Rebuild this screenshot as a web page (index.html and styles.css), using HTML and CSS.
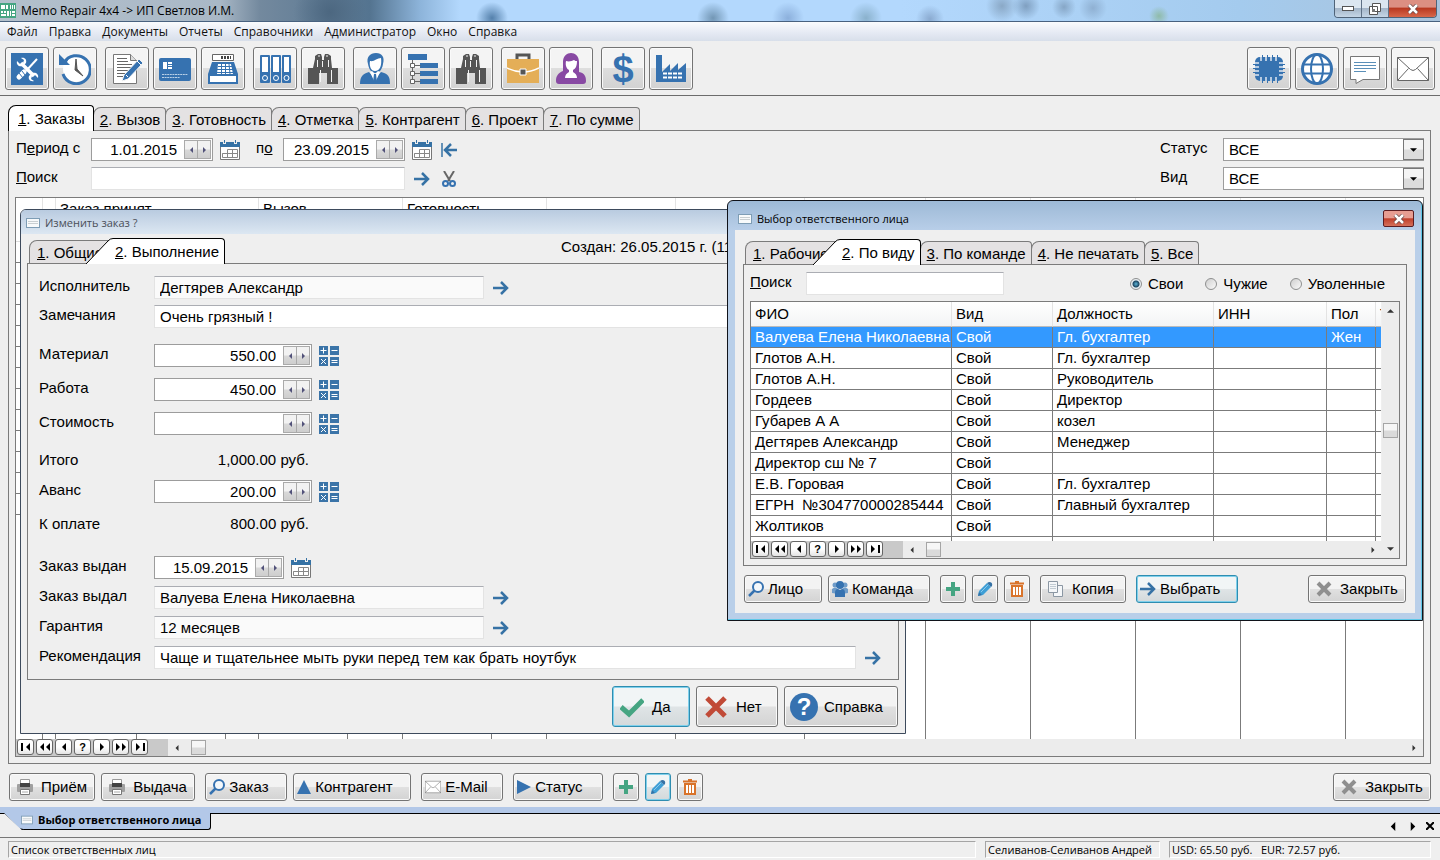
FILE: index.html
```html
<!DOCTYPE html>
<html lang="ru">
<head>
<meta charset="utf-8">
<title>Memo Repair 4x4</title>
<link rel="stylesheet" href="styles.css">
</head>
<body>
<svg class="sprite" aria-hidden="true">
  <symbol id="app" viewBox="0 0 16 16"><rect width="16" height="15" fill="#45a582"/><path fill="#fff" d="M1 2h4v4H1zM6 2h2v4H6zM10 2h1v4h-1zM12 2h1v4h-1zM14 2h1v4h-1zM1 8h2v2H1zM4 8h2v2H4zM1 11h5v2H1zM7 8h2v5H7zM10 8h1v5h-1zM12 8h3v2h-3zM12 11h3v2h-3z"/></symbol>
  <symbol id="form" viewBox="0 0 14 10"><rect x=".5" y=".5" width="13" height="9" fill="#f8fafb" stroke="#7e9db5"/><path d="M2 3.500h10M2 5.500h10" stroke="#c9cfd2"/></symbol>
  <symbol id="tools" viewBox="0 0 32 32"><rect width="32" height="32" fill="#3672b0"/><path d="M10 10l13 13" stroke="#fff" stroke-width="3.500"/><path d="M6 8l3 3 3-1 1-3-3-2c4-1 6 2 5 5l-3 3c-4 1-7-1-6-5zM27 25l-3-3-3 1-1 3 3 2c-4 1-6-2-5-5l3-3c4-1 7 1 6 5z" fill="#fff"/><path d="M26 6L15 18" stroke="#fff" stroke-width="2"/><path d="M13 19L8 24" stroke="#fff" stroke-width="5" stroke-linecap="round"/><path d="M8 20l4 5M11 18l3 4" stroke="#3672b0"/></symbol>
  <symbol id="history" viewBox="0 0 32 32"><circle cx="17" cy="16" r="13" fill="#fff"/><path d="M5 10A14 14 0 1 1 4 21" fill="none" stroke="#3672b0" stroke-width="3"/><path d="M0 1v11h11L8 9l2-4-4 2z" fill="#3672b0"/><path d="M17 6l1 10 6 7-8-6z" fill="#555" stroke="#555" stroke-width="1"/></symbol>
  <symbol id="note" viewBox="0 0 32 32"><path d="M2.500 1.500h17l6 6v23h-23z" fill="#fff" stroke="#777"/><path d="M19.500 1.500v6h6" fill="#ddd" stroke="#777"/><path d="M6 5.500h10M6 8.500h11M6 11.500h15M6 14.500h15M6 17.500h11M6 20.500h9M6 23.500h6" stroke="#666"/><path d="M13 22L28 6l4 4-15 16-6 2z" fill="#3672b0" stroke="#f3f3f3"/><path d="M26 8l4 4M15 22l2 2" stroke="#fff"/></symbol>
  <symbol id="card" viewBox="0 0 32 32"><rect y="5" width="32" height="23" rx="2" fill="#3672b0"/><path d="M4 9h4v7H4zM9 9h4v2H9zM9 12h4v1H9zM9 14h4v2H9z" fill="#fff"/><path d="M3 21.500h26M3 24.500h18" stroke="#b9d0e6" stroke-dasharray="2 .6"/></symbol>
  <symbol id="cash" viewBox="0 0 32 32"><path d="M5.500 1.500h21v6h-21z" fill="#fff" stroke="#666"/><path d="M14 4.500h10" stroke="#444" stroke-width="3" stroke-dasharray="2 1"/><path d="M5 9h22l4 12v10H1V21z" fill="#3672b0"/><path d="M3 23h26v6H3z" fill="#fff"/><path d="M11 11h13l2 10H10z" fill="#fff"/><path d="M11 13.500h14M10 16.500h16M10 19.500h16M14.500 11v10M18.500 11v10M22 11l1 10" stroke="#3672b0"/></symbol>
  <symbol id="binders" viewBox="0 0 32 32"><g fill="#3672b0"><rect x="1" y="2" width="10" height="28" rx="1"/><rect x="12" y="2" width="10" height="28" rx="1"/><rect x="23" y="2" width="9" height="28" rx="1"/></g><path d="M3 4h6v15H3zM14 4h6v15h-6zM25 4h5v15h-5z" fill="#fff"/><g fill="none" stroke="#fff"><circle cx="6" cy="25" r="2.500"/><circle cx="17" cy="25" r="2.500"/><circle cx="27.500" cy="25" r="2.500"/></g></symbol>
  <symbol id="binoc" viewBox="0 0 32 32"><path d="M8 6V3l3-2h3l1 3v3h2V4l1-3h3l3 2v3l1 9h6v16H20V20h-8v11H1V15h5z" fill="#555"/><path d="M10.500 7v7M15.500 8v6M21.500 7v7M13.500 17v12M24.500 17v12" stroke="#f4f4f4"/><path d="M11 3h2M19 3h2" stroke="#f4f4f4"/></symbol>
  <symbol id="man" viewBox="0 0 32 32"><path d="M9 11C7 4 11 0 17 0s9 4 7 11c-1 7-5 9-8 9s-6-3-7-9z" fill="#3672b0"/><path d="M11 8c4 1 7-3 11-3 1 7-1 13-6 13-4 0-6-5-5-10z" fill="#fff"/><path d="M1 31c0-8 3-10 9-12l6 7 6-7c7 2 9 4 9 12z" fill="#3672b0"/><path d="M11 19l5 11 5-11-2-1-3 3-3-3z" fill="#fff"/><path d="M15 21h2l1 8-2 2-2-2z" fill="#3672b0"/></symbol>
  <symbol id="tree" viewBox="0 0 32 32"><path d="M1 1h19v6H1zM13 10h18v5H13zM13 18h18v5H13zM13 26h18v5H13z" fill="#3672b0"/><path d="M5.500 7v22M5.500 12.500h8M5.500 20.500h8M5.500 28.500h8" stroke="#666" fill="none"/><path d="M3.500 10.500h4v4h-4zM3.500 18.500h4v4h-4zM3.500 26.500h4v4h-4z" fill="#fff" stroke="#666"/></symbol>
  <symbol id="brief" viewBox="0 0 32 32"><path d="M10 6V2h12v4" fill="none" stroke="#555" stroke-width="3"/><path d="M0 6h32v24H0z" fill="#e4ae57"/><path d="M0 15q16 8 32 0" fill="none" stroke="#fff" stroke-width="1.500"/><path d="M13 16h6v6h-6z" fill="#555" stroke="#fff"/></symbol>
  <symbol id="woman" viewBox="0 0 32 32"><path d="M8 18V9c0-6 4-9 8-9s8 3 8 9v10c6 1 7 5 7 9q0 3-3 3H4q-3 0-3-3c0-5 2-8 7-10z" fill="#8849a3"/><path d="M11 8c3 1 6 0 8-1 1 1 2 1 3 1 0 6-2 8-4 9v2q4 2 4 6H10q0-4 4-6v-2c-2-1-4-4-3-9z" fill="#fff"/></symbol>
  <symbol id="factory" viewBox="0 0 32 32"><path d="M1 2h6v17l8-8v7l8-8v7l8-7v19H1z" fill="#3672b0"/><path d="M8 20.500h19M8 24.500h19" stroke="#fff" stroke-width="2" stroke-dasharray="4 1"/></symbol>
  <symbol id="chip" viewBox="0 0 32 32"><rect x="2" y="4" width="28" height="24" rx="5" fill="#3672b0"/><path d="M8 4v4M13 4v4M18 4v4M23 4v4M8 24v4M13 24v4M18 24v4M23 24v4M2 10h4M2 14h4M2 18h4M2 22h4M26 10h4M26 14h4M26 18h4M26 22h4" stroke="#dfe8f1" stroke-width="1.500"/><path d="M9.500 2v6M14.500 2v6M19.500 2v6M24.500 2v6M9.500 24v6M14.500 24v6M19.500 24v6M24.500 24v6M0 11.500h6M0 15.500h6M0 19.500h6M26 11.500h6M26 15.500h6M26 19.500h6" stroke="#3672b0"/></symbol>
  <symbol id="globe" viewBox="0 0 32 32"><circle cx="16" cy="16" r="14.500" fill="#fff" stroke="#3672b0" stroke-width="3"/><ellipse cx="16" cy="16" rx="6" ry="14.500" fill="none" stroke="#3672b0" stroke-width="2"/><path d="M2 11.500h28M2 20.500h28" stroke="#3672b0" stroke-width="2"/></symbol>
  <symbol id="chat" viewBox="0 0 32 32"><path d="M1.500 3.500h29v23H14l-7 4v-4H1.500z" fill="#fff" stroke="#777"/><path d="M5 9.500h22M5 12.500h22M5 15.500h22M5 18.500h12" stroke="#5a8fb8"/></symbol>
  <symbol id="mail" viewBox="0 0 32 24"><path d="M.5.5h31v23H.5z" fill="#fff" stroke="#666"/><path d="M.5.5l13 12q2.500 2 5 0l13-12M.5 23.500l11-12M31.500 23.500l-11-12" fill="none" stroke="#666"/></symbol>
  <symbol id="cal" viewBox="0 0 20 20"><path d="M.5 6.500h19v13H.5z" fill="#fff" stroke="#777"/><path d="M0 2h3v2h3V2h8v2h3V2h3v5H0z" fill="#3672a5"/><path d="M4 0h1v3H4zM15 0h1v3h-1z" fill="#3672a5"/><path d="M7.500 9.500h10v8h-15v-4h15M2.500 13.500h5M7.500 9.500v8M12.500 9.500v8" fill="none" stroke="#888"/></symbol>
  <symbol id="right" viewBox="0 0 16 14"><path d="M0 7h14M8 1l6 6-6 6" fill="none" stroke="#3672a5" stroke-width="2.500"/></symbol>
  <symbol id="first" viewBox="0 0 16 14"><path d="M1 0v14" stroke="#3672a5" stroke-width="1.500"/><path d="M16 7H4M10 1L4 7l6 6" fill="none" stroke="#3672a5" stroke-width="2.500"/></symbol>
  <symbol id="cut" viewBox="0 0 14 16"><path d="M2 0l6 10M12 0L6 10" stroke="#666" stroke-width="2"/><g fill="none" stroke="#3672b0" stroke-width="2"><circle cx="3.500" cy="12.500" r="2.500"/><circle cx="10.500" cy="12.500" r="2.500"/></g></symbol>
  <symbol id="calc" viewBox="0 0 20 20"><path d="M0 0h9v9H0zM11 0h9v9h-9zM0 11h9v9H0zM11 11h9v9h-9z" fill="#3b74a8"/><path d="M1.500 4.500h6M4.500 1.500v6M12.500 4.500h6M2 13l5 5M7 13l-5 5M12.500 14.500h6M12.500 16.500h6" stroke="#fff"/></symbol>
  <symbol id="lens" viewBox="0 0 16 16"><circle cx="10" cy="6" r="5" fill="#f4f8fb" stroke="#3672b0" stroke-width="2"/><path d="M6.500 9.500L1 15" stroke="#3672b0" stroke-width="2.500"/></symbol>
  <symbol id="team" viewBox="0 0 16 16"><g fill="#6f9cc9"><circle cx="3" cy="4" r="2.500"/><circle cx="13" cy="4" r="2.500"/><path d="M0 12V8q3-3 6 0v5zM16 12V8q-3-3-6 0v5z"/></g><circle cx="8" cy="4" r="4" fill="#3672b0"/><path d="M3 16v-4q0-4 3-4l2 1 2-1q3 0 3 4v4z" fill="#3672b0"/></symbol>
  <symbol id="plus" viewBox="0 0 14 14"><path d="M7 0v14M0 7h14" stroke="#45a582" stroke-width="4"/></symbol>
  <symbol id="pencil" viewBox="0 0 16 16"><path d="M1 15l1-5 8-8 4 4-8 8z" fill="#3f9fd6"/><path d="M10 2l2-1q4 0 3 4l-1 1z" fill="#3672a5"/><path d="M4 11l7-7" stroke="#8cc9ec"/><path d="M1 15l1-4 3 3z" fill="#3672a5"/></symbol>
  <symbol id="bin" viewBox="0 0 14 16"><path d="M0 2.500h14M5 1h4" stroke="#d9732a" stroke-width="2"/><path d="M2 5h10v10H2z" fill="#fff" stroke="#d9732a" stroke-width="2"/><path d="M5.500 6v8M8.500 6v8" stroke="#d9732a"/></symbol>
  <symbol id="copy" viewBox="0 0 16 16"><path d="M5.500 4.500h9v11h-9z" fill="#f5f7f9" stroke="#8b97a3"/><path d="M.5.500h9v11h-9z" fill="#f5f7f9" stroke="#8b97a3"/><path d="M2 3.500h6M2 5.500h6M2 7.500h6" stroke="#c2ccd4"/></symbol>
  <symbol id="cross" viewBox="0 0 16 16"><path d="M2 2l12 12M14 2L2 14" stroke="currentColor" stroke-width="4"/></symbol>
  <symbol id="bigcross" viewBox="0 0 24 24"><path d="M3 3l18 18M21 3L3 21" stroke="#c14a37" stroke-width="5"/></symbol>
  <symbol id="check" viewBox="0 0 24 20"><path d="M1 10l8 7L23 3" fill="none" stroke="#45a582" stroke-width="5"/></symbol>
  <symbol id="print" viewBox="0 0 16 16"><path d="M3.500.5h9v6h-9z" fill="#fff" stroke="#999"/><rect y="5" width="16" height="8" rx="1" fill="#a0a0a0"/><path d="M3 4h10v4H3z" fill="#444"/><path d="M3.500 10.500h9v5h-9z" fill="#fff" stroke="#777"/><path d="M5 13h6" stroke="#aaa"/></symbol>
  <symbol id="tri-up" viewBox="0 0 14 14"><path d="M7 0l7 14H0z" fill="#3672b0"/></symbol>
  <symbol id="tri-right" viewBox="0 0 14 14"><path d="M0 0l14 7-14 7z" fill="#3672b0"/></symbol>
  <symbol id="al" viewBox="0 0 4 8"><path d="M4 0v8L0 4z" fill="currentColor"/></symbol>
  <symbol id="ar" viewBox="0 0 4 8"><path d="M0 0v8l4-4z" fill="currentColor"/></symbol>
  <symbol id="ad" viewBox="0 0 8 4"><path d="M0 0h8L4 4z" fill="currentColor"/></symbol>
  <symbol id="au" viewBox="0 0 8 4"><path d="M0 4h8L4 0z" fill="currentColor"/></symbol>
  <symbol id="n1" viewBox="0 0 12 8"><path d="M1 0h2v8H1zM10 0v8L6 4z"/></symbol>
  <symbol id="n2" viewBox="0 0 12 8"><path d="M5 0v8L1 4zM11 0v8L7 4z"/></symbol>
  <symbol id="n3" viewBox="0 0 12 8"><path d="M8 0v8L4 4z"/></symbol>
  <symbol id="n4" viewBox="0 0 12 8"><path d="M4 0v8l4-4z"/></symbol>
  <symbol id="n5" viewBox="0 0 12 8"><path d="M1 0v8l4-4zM7 0v8l4-4z"/></symbol>
  <symbol id="n6" viewBox="0 0 12 8"><path d="M2 0v8l4-4zM9 0h2v8H9z"/></symbol>
  <symbol id="slant" viewBox="0 0 27 26"><path d="M0 26L22 3q2-2.500 5-2.500V26z" fill="#fff"/><path d="M0 26L22 3q2-2.500 5-2.500" fill="none" stroke="#000"/></symbol>
</svg>

<header class="titlebar">
  <svg class="i16"><use href="#app"/></svg>
  <h1>Memo Repair 4x4 -&gt; ИП Светлов И.М.</h1>
  <div class="winbtns">
    <button aria-label="Свернуть"><svg width="12" height="5"><rect x=".5" y=".5" width="11" height="4" fill="#fff" stroke="#555"/></svg></button>
    <button aria-label="Восстановить"><svg width="12" height="12"><path d="M3.500.5h8v8h-8zM.5 3.500h8v8h-8z" fill="#fff" stroke="#555"/><path d="M3 6h3v3H3z" fill="#777"/></svg></button>
    <button class="x" aria-label="Закрыть окно"><svg width="12" height="10"><path d="M2 1l8 8M10 1L2 9" stroke="#644" stroke-width="4"/><path d="M2 1l8 8M10 1L2 9" stroke="#fff" stroke-width="2.500"/></svg></button>
  </div>
</header>
<nav class="menu"><a href="#">Файл</a><a href="#">Правка</a><a href="#">Документы</a><a href="#">Отчеты</a><a href="#">Справочники</a><a href="#">Администратор</a><a href="#">Окно</a><a href="#">Справка</a></nav>
<div class="toolbar">
  <div class="grp"><button aria-label="Ремонт"><svg><use href="#tools"/></svg></button><button aria-label="История"><svg><use href="#history"/></svg></button></div>
  <div class="grp"><button aria-label="Документ"><svg><use href="#note"/></svg></button><button aria-label="Карта"><svg><use href="#card"/></svg></button><button aria-label="Касса"><svg><use href="#cash"/></svg></button></div>
  <div class="grp"><button aria-label="Архив"><svg><use href="#binders"/></svg></button><button aria-label="Поиск в архиве"><svg><use href="#binoc"/></svg></button></div>
  <div class="grp"><button aria-label="Контрагент"><svg><use href="#man"/></svg></button><button aria-label="Структура"><svg><use href="#tree"/></svg></button><button aria-label="Поиск контрагента"><svg><use href="#binoc"/></svg></button></div>
  <div class="grp"><button aria-label="Портфель"><svg><use href="#brief"/></svg></button><button aria-label="Сотрудник"><svg><use href="#woman"/></svg></button></div>
  <div class="grp"><button class="dollar" aria-label="Валюта">$</button><button aria-label="Предприятие"><svg><use href="#factory"/></svg></button></div>
  <div class="grp end"><button aria-label="Оборудование"><svg><use href="#chip"/></svg></button><button aria-label="Сайт"><svg><use href="#globe"/></svg></button><button aria-label="Сообщения"><svg><use href="#chat"/></svg></button><button aria-label="Почта"><svg><use href="#mail"/></svg></button></div>
</div>

<main class="main">
  <div class="tabs">
    <button class="tab on"><u>1</u>. Заказы</button><button class="tab"><u>2</u>. Вызов</button><button class="tab"><u>3</u>. Готовность</button><button class="tab"><u>4</u>. Отметка</button><button class="tab"><u>5</u>. Контрагент</button><button class="tab"><u>6</u>. Проект</button><button class="tab"><u>7</u>. По сумме</button>
  </div>
  <section class="panel">
    <div class="filters">
      <div class="frow">
        <label class="flabel" for="from">П<u>е</u>риод с</label>
        <div class="spin date"><input id="from" value="1.01.2015"><button aria-label="Раньше"><svg><use href="#al"/></svg></button><button aria-label="Позже"><svg><use href="#ar"/></svg></button></div>
        <button class="ib" aria-label="Календарь"><svg class="i20"><use href="#cal"/></svg></button>
        <label class="to" for="to">п<u>о</u></label>
        <div class="spin date"><input id="to" value="23.09.2015"><button aria-label="Раньше"><svg><use href="#al"/></svg></button><button aria-label="Позже"><svg><use href="#ar"/></svg></button></div>
        <button class="ib" aria-label="Календарь"><svg class="i20"><use href="#cal"/></svg></button>
        <button class="ib" aria-label="В начало"><svg class="i16"><use href="#first"/></svg></button>
        <label class="slabel" for="status">Статус</label>
        <div class="sel"><select id="status"><option>ВСЕ</option></select><span><svg><use href="#ad"/></svg></span></div>
      </div>
      <div class="frow">
        <label class="flabel" for="find"><u>П</u>оиск</label>
        <input class="txt find" id="find">
        <button class="ib" aria-label="Найти"><svg class="i16"><use href="#right"/></svg></button>
        <button class="ib" aria-label="Очистить"><svg class="i16"><use href="#cut"/></svg></button>
        <label class="slabel" for="kind">Вид</label>
        <div class="sel"><select id="kind"><option>ВСЕ</option></select><span><svg><use href="#ad"/></svg></span></div>
      </div>
    </div>
    <div class="gridbox">
      <div class="orders">
        <table>
          <colgroup><col class="w27"><col class="w13"><col class="w81"><col class="w89"><col class="w33"><col class="w89"><col class="w55"><col class="w89"><col class="w55"><col class="w129"><col class="w129"><col class="w121"><col class="w105"><col class="w105"><col class="w105"><col class="w105"><col></colgroup>
          <thead><tr><th></th><th></th><th colspan="3">Заказ принят</th><th colspan="2">Вызов</th><th colspan="2">Готовность</th><th></th><th></th><th></th><th></th><th></th><th></th><th></th><th></th></tr></thead>
          <tbody id="rows"></tbody>
        </table>
      </div>
      <div class="navrow">
        <div class="nav"><button aria-label="Первая"><svg><use href="#n1"/></svg></button><button aria-label="Страница назад"><svg><use href="#n2"/></svg></button><button aria-label="Назад"><svg><use href="#n3"/></svg></button><button>?</button><button aria-label="Вперёд"><svg><use href="#n4"/></svg></button><button aria-label="Страница вперёд"><svg><use href="#n5"/></svg></button><button aria-label="Последняя"><svg><use href="#n6"/></svg></button></div>
        <div class="hscroll"><svg class="sa"><use href="#al"/></svg><i class="thumb"></i><svg class="sa last"><use href="#ar"/></svg></div>
      </div>
    </div>
  </section>
  <div class="actions">
    <button class="btn b86"><svg class="i16"><use href="#print"/></svg>Приём</button>
    <button class="btn b94 gap"><svg class="i16"><use href="#print"/></svg>Выдача</button>
    <button class="btn b82 tight"><svg class="i16"><use href="#lens"/></svg>Заказ</button>
    <button class="btn b118 tight gap"><svg class="i14"><use href="#tri-up"/></svg>Контрагент</button>
    <button class="btn b82 tight gap"><svg class="i16"><use href="#mail"/></svg>E-Mail</button>
    <button class="btn b90 tight gap"><svg class="i14"><use href="#tri-right"/></svg>Статус</button>
    <button class="btn sq" aria-label="Добавить"><svg class="i14"><use href="#plus"/></svg></button>
    <button class="btn sq hot" aria-label="Изменить"><svg class="i16"><use href="#pencil"/></svg></button>
    <button class="btn sq" aria-label="Удалить"><svg class="i16"><use href="#bin"/></svg></button>
    <button class="btn b98 close"><svg class="i16 grey"><use href="#cross"/></svg>Закрыть</button>
  </div>
</main>

<footer>
  <div class="wtabs">
    <button class="wtab"><svg class="edge" viewBox="0 0 24 18"><path d="M0 .5h4L17 14q3 3.500 7 3.500V0H0z" fill="#b3c8e8"/><path d="M0 .5h4L17 14q3 3.500 7 3.500" fill="none" stroke="#000"/></svg><svg class="fi"><use href="#form"/></svg>Выбор ответственного лица</button>
    <div class="warr"><button aria-label="Влево"><svg><use href="#al"/></svg></button><button aria-label="Вправо"><svg><use href="#ar"/></svg></button><button aria-label="Закрыть вкладку"><svg class="wx" viewBox="0 0 8 8"><path d="M0 0l8 8M8 0L0 8" stroke="#000" stroke-width="2"/></svg></button></div>
  </div>
  <div class="status"><div class="s1">Список ответственных лиц</div><div class="s2">Селиванов-Селиванов Андрей</div><div class="s3">USD: 65.50 руб.&nbsp;&nbsp; EUR: 72.57 руб.</div></div>
</footer>

<section class="win order">
  <header class="wt"><svg class="fi"><use href="#form"/></svg><h2>Изменить заказ ?</h2></header>
  <div class="tabs">
    <button class="tab under"><u>1</u>. Общие</button><button class="tab on slanted"><svg class="slant"><use href="#slant"/></svg><u>2</u>. Выполнение</button>
    <p class="created">Создан: 26.05.2015 г. (11</p>
  </div>
  <div class="panel form">
    <div class="g gap6">
      <div class="row"><label for="f1">Исполнитель</label><input class="txt ro w330" id="f1" value="Дегтярев Александр"><button class="ib" aria-label="Выбрать"><svg class="i16"><use href="#right"/></svg></button></div>
      <div class="row"><label for="f2">Замечания</label><input class="txt wide" id="f2" value="Очень грязный !"></div>
    </div>
    <div class="g gap11">
      <div class="row"><label for="f3">Материал</label><div class="spin money"><input id="f3" value="550.00"><button aria-label="Меньше"><svg><use href="#al"/></svg></button><button aria-label="Больше"><svg><use href="#ar"/></svg></button></div><button class="ib" aria-label="Калькулятор"><svg class="i20"><use href="#calc"/></svg></button></div>
      <div class="row"><label for="f4">Работа</label><div class="spin money"><input id="f4" value="450.00"><button aria-label="Меньше"><svg><use href="#al"/></svg></button><button aria-label="Больше"><svg><use href="#ar"/></svg></button></div><button class="ib" aria-label="Калькулятор"><svg class="i20"><use href="#calc"/></svg></button></div>
      <div class="row"><label for="f5">Стоимость</label><div class="spin money"><input id="f5"><button aria-label="Меньше"><svg><use href="#al"/></svg></button><button aria-label="Больше"><svg><use href="#ar"/></svg></button></div><button class="ib" aria-label="Калькулятор"><svg class="i20"><use href="#calc"/></svg></button></div>
    </div>
    <div class="g gap9">
      <div class="row"><span class="l">Итого</span><output>1,000.00 руб.</output></div>
      <div class="row"><label for="f6">Аванс</label><div class="spin money"><input id="f6" value="200.00"><button aria-label="Меньше"><svg><use href="#al"/></svg></button><button aria-label="Больше"><svg><use href="#ar"/></svg></button></div><button class="ib" aria-label="Калькулятор"><svg class="i20"><use href="#calc"/></svg></button></div>
      <div class="row"><span class="l">К оплате</span><output>800.00 руб.</output></div>
    </div>
    <div class="g gap7">
      <div class="row"><label for="f7">Заказ выдан</label><div class="spin given"><input id="f7" value="15.09.2015"><button aria-label="Раньше"><svg><use href="#al"/></svg></button><button aria-label="Позже"><svg><use href="#ar"/></svg></button></div><button class="ib" aria-label="Календарь"><svg class="i20"><use href="#cal"/></svg></button></div>
      <div class="row"><label for="f8">Заказ выдал</label><input class="txt ro w330" id="f8" value="Валуева Елена Николаевна"><button class="ib" aria-label="Выбрать"><svg class="i16"><use href="#right"/></svg></button></div>
      <div class="row"><label for="f9">Гарантия</label><input class="txt ro w330" id="f9" value="12 месяцев"><button class="ib" aria-label="Выбрать"><svg class="i16"><use href="#right"/></svg></button></div>
      <div class="row"><label for="f10">Рекомендация</label><input class="txt wide" id="f10" value="Чаще и тщательнее мыть руки перед тем как брать ноутбук"><button class="ib" aria-label="Выбрать"><svg class="i16"><use href="#right"/></svg></button></div>
    </div>
  </div>
  <div class="confirm">
    <button class="btn big b78 hot"><svg class="i24"><use href="#check"/></svg>Да</button>
    <button class="btn big b82"><svg class="i24"><use href="#bigcross"/></svg>Нет</button>
    <button class="btn big b114"><span class="q">?</span>Справка</button>
  </div>
</section>

<section class="win person">
  <header class="wt"><svg class="fi"><use href="#form"/></svg><h2>Выбор ответственного лица</h2><button class="wclose" aria-label="Закрыть окно"><svg width="12" height="10"><path d="M2 1l8 8M10 1L2 9" stroke="#644" stroke-width="4"/><path d="M2 1l8 8M10 1L2 9" stroke="#fff" stroke-width="2.500"/></svg></button></header>
  <div class="client">
    <div class="tabs">
      <button class="tab under"><u>1</u>. Рабочие</button><button class="tab on slanted"><svg class="slant"><use href="#slant"/></svg><u>2</u>. По виду</button><button class="tab"><u>3</u>. По команде</button><button class="tab"><u>4</u>. Не печатать</button><button class="tab"><u>5</u>. Все</button>
    </div>
    <div class="panel plist">
      <div class="psearch"><label for="ps"><u>П</u>оиск</label><input class="txt" id="ps">
        <div class="radios"><label><input type="radio" name="own" checked>Свои</label><label><input type="radio" name="own">Чужие</label><label><input type="radio" name="own">Уволенные</label></div>
      </div>
      <div class="people">
        <div class="pcol">
          <table>
            <colgroup><col class="w201"><col class="w101"><col class="w161"><col class="w113"><col class="w49"><col></colgroup>
            <thead><tr><th>ФИО</th><th>Вид</th><th>Должность</th><th>ИНН</th><th>Пол</th><th>Т</th></tr></thead>
            <tbody>
              <tr class="cur"><td>Валуева Елена Николаевна</td><td>Свой</td><td>Гл. бухгалтер</td><td></td><td>Жен</td><td></td></tr>
              <tr><td>Глотов А.Н.</td><td>Свой</td><td>Гл. бухгалтер</td><td></td><td></td><td></td></tr>
              <tr><td>Глотов А.Н.</td><td>Свой</td><td>Руководитель</td><td></td><td></td><td></td></tr>
              <tr><td>Гордеев</td><td>Свой</td><td>Директор</td><td></td><td></td><td></td></tr>
              <tr><td>Губарев А А</td><td>Свой</td><td>козел</td><td></td><td></td><td></td></tr>
              <tr><td>Дегтярев Александр</td><td>Свой</td><td>Менеджер</td><td></td><td></td><td></td></tr>
              <tr><td>Директор сш № 7</td><td>Свой</td><td></td><td></td><td></td><td></td></tr>
              <tr><td>Е.В. Горовая</td><td>Свой</td><td>Гл. бухгалтер</td><td></td><td></td><td></td></tr>
              <tr><td>ЕГРН&nbsp; №304770000285444</td><td>Свой</td><td>Главный бухгалтер</td><td></td><td></td><td></td></tr>
              <tr><td>Жолтиков</td><td>Свой</td><td></td><td></td><td></td><td></td></tr>
              <tr class="rest"><td></td><td></td><td></td><td></td><td></td><td></td></tr>
            </tbody>
          </table>
          <div class="navrow">
            <div class="nav"><button aria-label="Первая"><svg><use href="#n1"/></svg></button><button aria-label="Страница назад"><svg><use href="#n2"/></svg></button><button aria-label="Назад"><svg><use href="#n3"/></svg></button><button>?</button><button aria-label="Вперёд"><svg><use href="#n4"/></svg></button><button aria-label="Страница вперёд"><svg><use href="#n5"/></svg></button><button aria-label="Последняя"><svg><use href="#n6"/></svg></button></div>
            <div class="hscroll"><svg class="sa"><use href="#al"/></svg><i class="thumb"></i><svg class="sa last"><use href="#ar"/></svg></div>
          </div>
        </div>
        <div class="vscroll"><svg><use href="#au"/></svg><i class="thumb"></i><svg><use href="#ad"/></svg></div>
      </div>
    </div>
    <div class="actions">
      <button class="btn b78 tight"><svg class="i16"><use href="#lens"/></svg>Лицо</button>
      <button class="btn b102 tight gap"><svg class="i16"><use href="#team"/></svg>Команда</button>
      <button class="btn sq" aria-label="Добавить"><svg class="i14"><use href="#plus"/></svg></button>
      <button class="btn sq" aria-label="Изменить"><svg class="i16"><use href="#pencil"/></svg></button>
      <button class="btn sq gap" aria-label="Удалить"><svg class="i16"><use href="#bin"/></svg></button>
      <button class="btn b86 gap"><svg class="i16"><use href="#copy"/></svg>Копия</button>
      <button class="btn b102 tight hot"><svg class="i16"><use href="#right"/></svg>Выбрать</button>
      <button class="btn b98 close"><svg class="i16 grey"><use href="#cross"/></svg>Закрыть</button>
    </div>
  </div>
</section>
<script src="rows.js"></script>
</body>
</html>
```
FILE: rows.js
```js
const body = document.getElementById('rows');
const cells = '<td></td>'.repeat(17);
for (let i = 0; i < 14; i++) {
  const tr = body.insertRow();
  tr.innerHTML = cells;
  if (i === 13) tr.className = 'rest';
}
```
FILE: styles.css
```css
* { box-sizing: border-box; }
:root {
  --face: #efefef;
  --line: #7b7b7b;
  --ui: "Open Sans", "Noto Sans", sans-serif;
}
body {
  margin: 0;
  min-height: 100vh;
  display: flex;
  flex-direction: column;
  position: relative;
  overflow: hidden;
  background: var(--face);
  color: #000;
  font: 15px/20px "Liberation Sans", Arial, sans-serif;
}
button, input, select { font: inherit; color: inherit; margin: 0; padding: 0; }
button { border: 0; background: none; }
h1, h2, p { margin: 0; font-weight: normal; }
svg { display: block; flex: none; }
.sprite { position: absolute; width: 0; height: 0; }
.i14 { width: 14px; height: 14px; }
.i16 { width: 16px; height: 16px; }
.i20 { width: 20px; height: 20px; }
.i24 { width: 24px; height: 24px; }
.fi { width: 14px; height: 10px; }
.grey { color: #8f8f8f; }

.titlebar {
  display: flex;
  align-items: center;
  gap: 5px;
  height: 22px;
  border-bottom: 1px solid #48617f;
  background:
    radial-gradient(circle at 330px 12px, #4c6780 0, transparent 36px),
    radial-gradient(circle at 492px 18px, #5480ab 0, transparent 16px),
    radial-gradient(circle at 713px 18px, #7296b4 0, transparent 16px),
    radial-gradient(circle at 788px 18px, #8cb0dc 0, transparent 16px),
    radial-gradient(circle at 866px 18px, #8ab1cc 0, transparent 16px),
    radial-gradient(circle at 930px 19px, #8aaad0 0, transparent 14px),
    radial-gradient(circle at 1002px 6px, #8aa8c6 0, transparent 16px),
    radial-gradient(circle at 1026px 6px, #7f9fc0 0, transparent 14px),
    radial-gradient(circle at 1064px 7px, #86a6c6 0, transparent 12px),
    radial-gradient(circle at 1093px 8px, #8fb0d2 0, transparent 14px),
    radial-gradient(circle at 1159px 16px, #8fbba9 0, transparent 10px),
    linear-gradient(90deg, #b3c0cc 0, #a9b8c6 220px, #73899e 260px, #547490 370px, #8db4da 420px, #b3d8fd 460px, #b3d8fd 900px, #a4cbee 1240px, #a9c3dc 100%);
}
.titlebar h1 { font: 12px/20px var(--ui); flex: 1; }
.winbtns { display: flex; align-self: flex-start; margin-right: 3px; border: 1px solid #4f6378; border-top: 0; border-radius: 0 0 4px 4px; overflow: hidden; }
.winbtns button { display: flex; justify-content: center; align-items: center; width: 27px; height: 17px; border-right: 1px solid #5e7186; background: linear-gradient(#dbe6f0 45%, #a4b6c9 50%, #c5d6e6); }
.winbtns .x { width: 47px; border: 0; background: linear-gradient(#dc8f82 40%, #b93a22 50%, #d8674a); }

.menu { display: flex; gap: 11px; height: 19px; padding-left: 7px; background: linear-gradient(#fafbfd, #e4e9f3 60%, #d8dfea); font: 12px/19px var(--ui); }
.menu a { color: #111; text-decoration: none; }

.toolbar { display: flex; gap: 8px; padding: 6px 5px 5px; border-bottom: 1px solid #6c6c6c; }
.grp { display: flex; gap: 4px; }
.end { margin-left: auto; }
.toolbar button {
  display: flex; align-items: center; justify-content: center;
  width: 44px; height: 43px;
  border: 1px solid #747474; border-radius: 3px;
  box-shadow: inset 0 0 0 1px #fafafa;
  background: linear-gradient(#f4f4f4 48%, #dedede 50%, #d2d2d2);
}
.toolbar svg { width: 32px; height: 32px; }
.toolbar .dollar { color: #3672b0; font-size: 38px; font-weight: bold; line-height: 40px; }

.main { flex: 1; display: flex; flex-direction: column; padding: 9px 9px 6px 8px; }
.tabs { display: flex; align-items: flex-end; height: 25px; }
.tab {
  position: relative;
  height: 23px; padding: 0 5px 0 6px;
  border: 1px solid var(--line); border-bottom: 0;
  border-radius: 8px 4px 0 0;
  background: #e4e2e3;
  white-space: nowrap;
  line-height: 23px;
}
.tab + .tab { margin-left: -1px; }
.tab.under { padding-left: 7px; }
.tab.on { z-index: 1; height: 26px; margin-bottom: -1px; padding: 0 8px 0 9px; border-color: #000; background: #fff; line-height: 24px; }
.tab.slanted { border-left: 0; border-radius: 0 4px 0 0; padding: 0 5px 0 2px; }
.slant { position: absolute; right: 100%; top: -1px; width: 27px; height: 26px; }
.panel { border: 1px solid var(--line); }
.main > .panel { flex: 1; display: flex; flex-direction: column; padding: 7px 6px 6px; }
.filters { display: flex; flex-direction: column; gap: 6px; margin-bottom: 7px; }
.frow { display: flex; align-items: center; }
.flabel { width: 76px; line-height: 18px; padding-bottom: 3px; padding-left: 1px; }
.to { width: 27px; margin-left: 16px; padding-bottom: 3px; line-height: 18px; }
.frow .ib { margin-left: 7px; min-width: 20px; }
.find { width: 314px; }
.slabel { margin-left: auto; width: 63px; padding-bottom: 3px; line-height: 18px; }
.ib { display: flex; justify-content: center; align-items: center; }
.txt { height: 23px; padding: 0 5px; border: 1px solid #e3e3e3; border-top-color: #abadb3; background: #fff; }
.ro { background: #fafafa; }
.spin { display: flex; height: 23px; padding: 1px; border: 1px solid #9c9c9c; background: #fff; }
.spin input { flex: 1; width: 0; border: 0; background: none; text-align: right; padding: 0 8px 0 0; }
.spin button { display: flex; align-items: center; justify-content: center; width: 14px; margin-left: -1px; border: 1px solid #aaa; background: linear-gradient(#f2f2f2 45%, #d8d8d8 55%, #cecece); color: #52527a; }
.spin svg { width: 3px; height: 6px; }
.date { width: 122px; }
.sel { position: relative; width: 201px; height: 23px; }
.sel select { width: 100%; height: 100%; padding: 0 5px; border: 1px solid #9c9c9c; border-radius: 0; background: #fff; appearance: none; }
.sel span { position: absolute; right: 0; top: 1px; width: 21px; height: 21px; border: 1px solid #777; background: linear-gradient(#f4f4f4 48%, #dcdcdc 52%); display: flex; align-items: center; justify-content: center; pointer-events: none; }
.sel svg { width: 7px; height: 4px; }

.gridbox { flex: 1; display: flex; flex-direction: column; border: 1px solid var(--line); background: #fff; }
.orders { flex: 1; display: grid; }
table { table-layout: fixed; width: 100%; border-collapse: separate; border-spacing: 0; background: #fff; }
th, td { padding: 0 0 0 4px; overflow: hidden; white-space: nowrap; text-align: left; font-weight: normal; border-right: 1px solid var(--line); }
td { height: 21px; line-height: 20px; border-bottom: 1px solid var(--line); }
th:last-child, td:last-child { border-right: 0; }
th { border-right-color: #e3e3e3; background: linear-gradient(#fff, #f3f4f5); }
.orders th { height: 44px; padding-top: 1px; vertical-align: top; border-bottom: 1px solid #ddd; background: #fff; }
.rest td { height: auto; border-bottom: 0; }
.w13 { width: 13px; } .w27 { width: 27px; } .w33 { width: 33px; } .w49 { width: 49px; } .w55 { width: 55px; }
.w81 { width: 81px; } .w89 { width: 89px; } .w101 { width: 101px; } .w105 { width: 105px; } .w113 { width: 113px; }
.w121 { width: 121px; } .w129 { width: 129px; } .w161 { width: 161px; } .w201 { width: 201px; }
.navrow { display: flex; height: 17px; background: #ececec; }
.nav { display: flex; gap: 2px; width: 152px; padding: 0 1px; background: #c9c9c9; }
.nav button { display: flex; align-items: center; justify-content: center; width: 17px; height: 16px; border: 1px solid #666; border-radius: 3px; background: linear-gradient(#fff 50%, #e4e4e4); font: bold 11px/14px "Liberation Sans", Arial, sans-serif; }
.nav svg { width: 12px; height: 8px; }
.hscroll { flex: 1; display: flex; align-items: center; gap: 12px; padding: 0 7px; color: #333; }
.sa { width: 4px; height: 6px; }
.last { margin-left: auto; }
.thumb { width: 15px; height: 15px; border: 1px solid #a5a5a5; background: linear-gradient(#f6f6f6 45%, #dadada 55%); }

.actions { display: flex; gap: 6px; padding: 9px 0 0 1px; }
.btn {
  display: flex; align-items: center; gap: 8px;
  height: 28px; padding: 0 7px;
  border: 1px solid #747474; border-radius: 3px;
  box-shadow: inset 0 0 0 1px #fafafa;
  background: linear-gradient(#f3f3f3 48%, #e0e0e0 52%, #d3d3d3);
  white-space: nowrap;
}
.actions .gap { margin-right: 4px; }
.tight { gap: 4px; padding: 0 3px; }
.sq { width: 26px; padding: 0; justify-content: center; }
.close { margin-left: auto; }
.hot { border-color: #2f8db0; box-shadow: inset 0 0 0 1px #7fd0ec; background: linear-gradient(#f1f5f6 48%, #dfe4e6 52%, #d3d9db); }
.b78 { min-width: 78px; } .b82 { min-width: 82px; } .b86 { min-width: 86px; } .b90 { min-width: 90px; } .b94 { min-width: 94px; }
.b98 { min-width: 98px; } .b102 { min-width: 102px; } .b114 { min-width: 114px; } .b118 { min-width: 118px; }

.wtabs { display: flex; justify-content: space-between; height: 31px; border-top: 6px solid #b3c8e8; border-bottom: 1px solid #777; background: linear-gradient(#000, #000) 0 0 / 100% 1px no-repeat; }
.wtab { position: relative; display: flex; align-items: center; gap: 5px; height: 17px; padding: 0 9px 3px 21px; border: 1px solid #000; border-width: 0 1px 1px 0; border-radius: 0 0 3px 0; background: #b3c8e8; font: bold 11px/13px var(--ui); clip-path: polygon(4px 0, 100% 0, 100% 100%, 22px 100%); }
.edge { position: absolute; left: 0; top: 0; width: 24px; height: 17px; }
.wtab .fi { position: relative; width: 12px; }
.warr { display: flex; align-items: center; gap: 14px; padding: 2px 6px 0 0; }
.warr svg { width: 6px; height: 9px; }
.warr .wx { width: 8px; height: 8px; }
.warr button:last-child { margin-left: -4px; }
.status { display: flex; gap: 9px; padding: 3px 9px 2px 8px; font: 11px/16px var(--ui); }
.status div { height: 17px; padding: 0 2px; border: 1px solid #a5a5a5; border-color: #a5a5a5 #fff #fff #a5a5a5; white-space: nowrap; }
.s1 { flex: 1; }
.s2 { width: 175px; }
.s3 { width: 262px; }

.win { position: absolute; background: var(--face); border: 1px solid #3d4a5c; border-radius: 6px 6px 0 0; }
.wt { display: flex; align-items: center; gap: 5px; font: 11px/16px var(--ui); }
.wt h2 { font: inherit; flex: 1; }
.order { left: 20px; top: 209px; width: 886px; }
.order .wt { height: 24px; padding: 2px 5px 0; border-radius: 5px 5px 0 0; background: linear-gradient(#b9cbe0, #dce7f2); color: #4a4f58; }
.order .tabs { height: 25px; margin: 4px 6px 0 8px; }
.order .tab.under { width: 85px; text-align: left; }
.created { margin-left: auto; width: 338px; padding-bottom: 6px; }
.form { margin: 0 6px; padding: 12px 6px 10px 11px; }
.g { display: flex; flex-direction: column; }
.gap6 { gap: 6px; margin-bottom: 16px; }
.gap11 { gap: 11px; margin-bottom: 13px; }
.gap9 { gap: 9px; margin-bottom: 21px; }
.gap7 { gap: 7px; }
.row { display: flex; align-items: center; height: 23px; }
.row label, .row .l { width: 115px; }
.row label { padding-bottom: 3px; }
.row .ib { margin-left: 7px; min-width: 20px; }
.w330 { width: 330px; }
.wide { flex: 1; }
.gap7 .wide + .ib { margin-right: 9px; }
.money { width: 158px; }
.given { width: 130px; }
output { width: 155px; text-align: right; }
.confirm { display: flex; justify-content: flex-end; gap: 6px; padding: 6px 7px; }
.big { height: 41px; }
.b114.big { padding: 0 5px; gap: 6px; }
.q { width: 28px; height: 28px; border-radius: 50%; background: #3672b0; color: #fff; font: bold 24px/28px "Liberation Sans", Arial, sans-serif; }

.person { right: 17px; top: 200px; width: 696px; padding: 0 7px 7px; border-color: #10131a; background: linear-gradient(#9db9d6, #b9cfe9 30px, #b9cfe9); box-shadow: inset -1px -1px 0 #5fc8e8; }
.person .wt { height: 29px; padding: 6px 1px 0 3px; }
.wclose { display: flex; align-items: center; justify-content: center; width: 31px; height: 17px; border: 1px solid #5b1d22; border-radius: 2px; background: linear-gradient(#e79d92 45%, #c0402c 52%, #d5705a); }
.client { padding: 9px 8px 10px; background: var(--face); }
.person .tabs { padding-left: 2px; }
.person .tab.under { width: 96px; text-align: left; }
.plist { padding: 7px 6px 6px; }
.psearch { display: flex; align-items: center; margin-bottom: 6px; }
.psearch > label { width: 56px; padding-bottom: 3px; }
.psearch .txt { width: 198px; }
.radios { display: flex; gap: 22px; margin-left: auto; padding-right: 15px; }
.radios label { display: flex; align-items: center; gap: 6px; }
.radios input { appearance: none; width: 12px; height: 12px; border: 1px solid #8e8f8f; border-radius: 50%; background: linear-gradient(135deg, #cfcfcf, #fafafa); }
.radios input:checked { background: radial-gradient(circle, #5cb5d8 0, #1c4763 3px, #e8eef2 4px); }
.people { display: flex; border: 1px solid var(--line); }
.pcol { flex: 1; min-width: 0; }
.person th { height: 25px; border-bottom: 1px solid #bbb; }
.person table { border-right: 1px solid #efefef; }
.rest td { line-height: 4px; }
.person .rest td { height: 4px; }
.cur td { background: #3399ff; color: #fff; }
.vscroll { display: flex; flex-direction: column; justify-content: space-between; align-items: center; width: 17px; padding: 7px 0; background: #ececec; color: #333; }
.vscroll svg { width: 7px; height: 4px; }
.person .actions { padding-right: 1px; }
```
